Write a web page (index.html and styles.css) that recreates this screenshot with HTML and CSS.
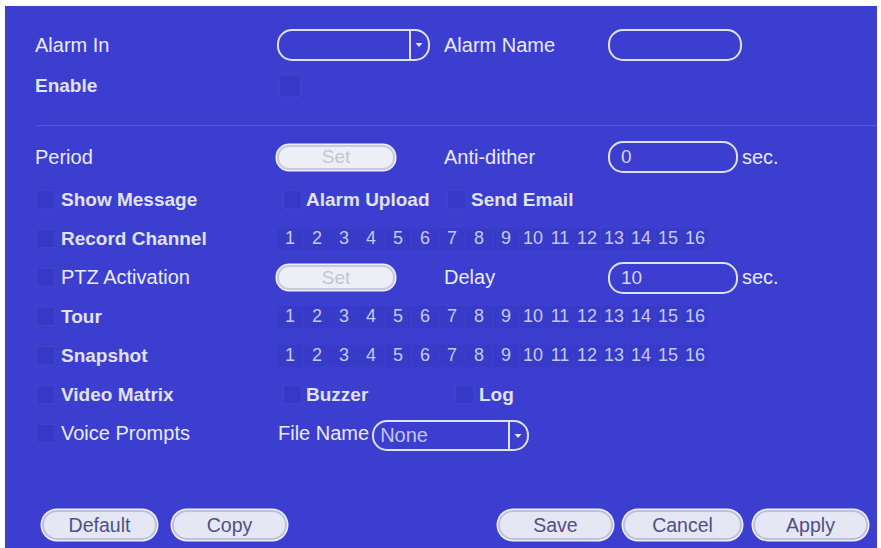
FILE: index.html
```html
<!DOCTYPE html>
<html>
<head>
<meta charset="utf-8">
<link rel="stylesheet" href="styles.css">
</head>
<body>
<div class="panel">
  <div class="row row-1">
    <div class="lbl">Alarm In</div>
    <div class="cell">
      <div class="select sel-alarm">
        <span class="sel-val"></span>
        <span class="sel-arrow"><svg width="8" height="6" viewBox="0 0 8 6"><path d="M0.5 1 L7.5 1 L4 5 Z" fill="#e6e8fa"/></svg></span>
      </div>
    </div>
    <div class="lbl">Alarm Name</div>
    <div class="cell"><div class="tb tb-name"></div></div>
  </div>
  <div class="row row-2">
    <div class="lbl-b">Enable</div>
    <div class="cell"><span class="chk chk-enable"></span></div>
  </div>
  <div class="sep"></div>
  <div class="row row-3">
    <div class="lbl">Period</div>
    <div class="cell"><div class="setbtn">Set</div></div>
    <div class="lbl">Anti-dither</div>
    <div class="cell tb-wrap"><div class="tb tb-sec"><span class="tb-val">0</span></div><span class="lbl">sec.</span></div>
  </div>
  <div class="row">
    <div class="cl cl-left"><span class="chk"></span><span class="lbl-b">Show Message</span></div>
    <div class="cl cl-mid"><span class="chk"></span><span class="lbl-b">Alarm Upload</span></div>
    <div class="cl cl-third"><span class="chk"></span><span class="lbl-b">Send Email</span></div>
  </div>
  <div class="row">
    <div class="cl cl-left"><span class="chk"></span><span class="lbl-b">Record Channel</span></div>
    <div class="chans">
      <span class="ch">1</span><span class="ch">2</span><span class="ch">3</span><span class="ch">4</span><span class="ch">5</span><span class="ch">6</span><span class="ch">7</span><span class="ch">8</span><span class="ch">9</span><span class="ch">10</span><span class="ch">11</span><span class="ch">12</span><span class="ch">13</span><span class="ch">14</span><span class="ch">15</span><span class="ch">16</span>
    </div>
  </div>
  <div class="row">
    <div class="cl cl-left"><span class="chk"></span><span class="lbl">PTZ Activation</span></div>
    <div class="cell"><div class="setbtn">Set</div></div>
    <div class="lbl">Delay</div>
    <div class="cell tb-wrap"><div class="tb tb-sec"><span class="tb-val">10</span></div><span class="lbl">sec.</span></div>
  </div>
  <div class="row">
    <div class="cl cl-left"><span class="chk"></span><span class="lbl-b">Tour</span></div>
    <div class="chans">
      <span class="ch">1</span><span class="ch">2</span><span class="ch">3</span><span class="ch">4</span><span class="ch">5</span><span class="ch">6</span><span class="ch">7</span><span class="ch">8</span><span class="ch">9</span><span class="ch">10</span><span class="ch">11</span><span class="ch">12</span><span class="ch">13</span><span class="ch">14</span><span class="ch">15</span><span class="ch">16</span>
    </div>
  </div>
  <div class="row">
    <div class="cl cl-left"><span class="chk"></span><span class="lbl-b">Snapshot</span></div>
    <div class="chans">
      <span class="ch">1</span><span class="ch">2</span><span class="ch">3</span><span class="ch">4</span><span class="ch">5</span><span class="ch">6</span><span class="ch">7</span><span class="ch">8</span><span class="ch">9</span><span class="ch">10</span><span class="ch">11</span><span class="ch">12</span><span class="ch">13</span><span class="ch">14</span><span class="ch">15</span><span class="ch">16</span>
    </div>
  </div>
  <div class="row">
    <div class="cl cl-left"><span class="chk"></span><span class="lbl-b">Video Matrix</span></div>
    <div class="cl cl-mid"><span class="chk"></span><span class="lbl-b">Buzzer</span></div>
    <div class="cl cl-log"><span class="chk"></span><span class="lbl-b">Log</span></div>
  </div>
  <div class="row">
    <div class="cl cl-left"><span class="chk"></span><span class="lbl">Voice Prompts</span></div>
    <div class="file">
      <span class="lbl">File Name</span>
      <div class="select sel-file">
        <span class="sel-val">None</span>
        <span class="sel-arrow"><svg width="8" height="6" viewBox="0 0 8 6"><path d="M0.5 1 L7.5 1 L4 5 Z" fill="#e6e8fa"/></svg></span>
      </div>
    </div>
  </div>
  <div class="actions">
    <div class="group">
      <div class="btn">Default</div>
      <div class="btn btn-copy">Copy</div>
    </div>
    <div class="group group-right">
      <div class="btn">Save</div>
      <div class="btn btn-cancel">Cancel</div>
      <div class="btn">Apply</div>
    </div>
  </div>
</div>
</body>
</html>
```

FILE: styles.css
```css
body {
  margin: 0;
  background: #ffffff;
  font-family: "Liberation Sans", Arial, sans-serif;
}

.panel {
  margin: 6px 4px 0 5px;
  height: 542px;
  box-sizing: border-box;
  background: #3b3ecf;
  padding: 21px 9px 8px 30px;
  display: flex;
  flex-direction: column;
  color: #eceef9;
}

.row {
  display: grid;
  grid-template-columns: 243px 166px 166px 1fr;
  align-items: center;
  height: 39px;
}

.row-1 { height: 36px; }
.row-2 { height: 46px; }
.row-3 { height: 38px; margin-bottom: 4px; }

.sep {
  height: 1px;
  background: #5459dd;
  margin: 16px -9px 12px 2px;
}

.cell {
  display: flex;
  align-items: center;
}

.lbl {
  font-size: 20px;
  color: #e9ebf9;
  white-space: nowrap;
}

.lbl-b {
  font-size: 19px;
  font-weight: bold;
  color: #e0e2f5;
  white-space: nowrap;
}

.chk {
  display: inline-block;
  width: 19px;
  height: 19px;
  box-sizing: border-box;
  border: 1px solid rgba(255, 255, 255, 0.06);
  background: rgba(30, 30, 150, 0.14);
  flex: none;
}

.chk-enable {
  width: 22px;
  height: 22px;
  margin-left: 1px;
}

.cl {
  display: flex;
  align-items: center;
}

.cl-left .chk { margin: 0 6px 0 1px; }
.cl-mid .chk { margin: 0 4px 0 5px; }
.cl-third .chk { margin: 0 5px 0 3px; }
.cl-log .chk { margin: 0 5px 0 11px; }

.select {
  display: flex;
  align-items: stretch;
  box-sizing: border-box;
  border: 2.5px solid #dfe1f6;
  border-radius: 15px;
  height: 32px;
}

.sel-alarm {
  width: 153px;
  margin-left: -1px;
}

.sel-val {
  flex: 1;
  font-size: 20px;
  color: #c3c7f2;
  display: flex;
  align-items: center;
  padding-left: 8px;
}

.sel-arrow {
  width: 15px;
  border-left: 2px solid #dfe1f6;
  display: flex;
  align-items: center;
  justify-content: center;
  padding-right: 2px;
}

.tb {
  box-sizing: border-box;
  border: 2.5px solid #dfe1f6;
  border-radius: 15px;
  height: 32px;
  display: flex;
  align-items: center;
}

.tb-name {
  width: 134px;
  margin-left: -2px;
}

.tb-wrap {
  gap: 4px;
}

.tb-sec {
  width: 130px;
  margin-left: -2px;
  padding-left: 11px;
}

.tb-val {
  font-size: 19px;
  color: #d2d5f6;
}

.setbtn {
  width: 118px;
  height: 25px;
  margin-left: -1px;
  box-sizing: border-box;
  border-radius: 12px;
  background: #eeeff6;
  border: 2px solid #c9cadf;
  box-shadow: 0 0 0 1.5px #eef0fb;
  color: #c4c5d3;
  font-size: 19px;
  display: flex;
  align-items: center;
  justify-content: center;
}

.chans {
  grid-column: 2 / span 3;
  display: flex;
  margin-left: -1px;
}

.ch {
  width: 26px;
  height: 22px;
  margin-right: 1px;
  background: #383bc8;
  color: #c6c9ee;
  font-size: 18px;
  display: flex;
  align-items: center;
  justify-content: center;
}

.file {
  grid-column: 2 / span 3;
  display: flex;
  align-items: center;
  gap: 3px;
}

.sel-file {
  width: 157px;
  height: 31px;
  margin-top: 4px;
}

.sel-file .sel-val {
  padding-left: 6px;
}

.actions {
  margin-top: auto;
  display: flex;
  justify-content: space-between;
  padding-left: 7px;
}

.group {
  display: flex;
  gap: 15px;
}

.group-right {
  gap: 10px;
}

.btn {
  width: 115px;
  height: 30px;
  box-sizing: border-box;
  border-radius: 15px;
  background: #e6e7f4;
  border: 2px solid #bfc1dc;
  box-shadow: 0 0 0 1.5px #eef0fb;
  color: #4e5089;
  font-size: 19.5px;
  display: flex;
  align-items: center;
  justify-content: center;
}

.btn-cancel {
  width: 119px;
  margin-right: 1px;
}
```
